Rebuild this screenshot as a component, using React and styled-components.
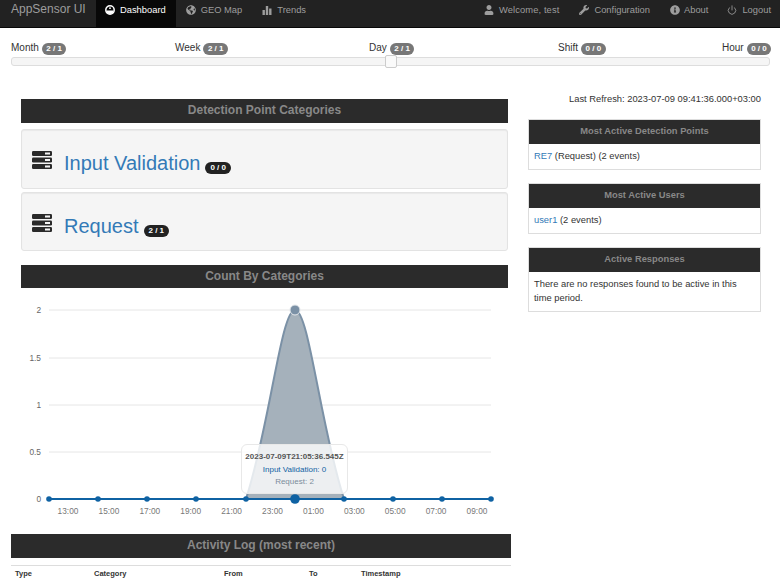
import React from 'react';
import styled, { createGlobalStyle } from 'styled-components';
import { FaUser, FaWrench, FaInfoCircle, FaGlobeAmericas } from 'react-icons/fa';
import { FiPower } from 'react-icons/fi';

const GlobalStyle = createGlobalStyle`
html, body {
    margin: 0;
    height: 580px;
    overflow: hidden;
    background: #fff;
    font-family: "Liberation Sans", Arial, sans-serif;
    font-size: 10px;
    color: #333;
}
`;

const Navbar = styled.nav`
display: flex;
justify-content: space-between;
height: 27px;
background: #222;
border-bottom: 1px solid #080808;
`;

const NavGroup = styled.div`
display: flex;
`;

const Brand = styled.div`
width: 96px;
box-sizing: border-box;
padding-left: 11px;
font-size: 12px;
line-height: 19px;
color: #9d9d9d;
`;

const NavItem = styled.div`
display: flex;
align-items: flex-start;
gap: ${p => p.$gap || 5}px;
padding: 5px ${p => p.$right || 10}px 0 ${p => p.$left || 10}px;
line-height: 10px;
font-size: 9.35px;
letter-spacing: ${p => p.$spacing || 0}px;
color: ${p => p.$active ? '#fff' : '#9d9d9d'};
background: ${p => p.$active ? '#080808' : 'transparent'};
svg { flex: none; width: 10px; height: 10px; }
`;

const SliderBlock = styled.div`
padding: 13px 10px 0 11px;
`;

const SliderLabels = styled.div`
display: grid;
grid-template-columns: 164px 194px 189px 164px 48px;
height: 15px;
`;

const SliderLabel = styled.div`
white-space: nowrap;
line-height: 13px;
font-size: 10px;
color: #333;
`;

const Badge = styled.span`
display: inline-block;
min-width: 10px;
padding: 0 ${p => p.$dark ? 5 : 4.5}px;
margin-left: ${p => p.$gap || 3}px;
line-height: 12px;
border-radius: 8px;
font-size: 8px;
font-weight: bold;
text-align: center;
color: #fff;
background: ${p => p.$dark ? '#222' : '#777'};
`;

const Track = styled.div`
position: relative;
height: 7px;
margin-top: 1px;
background: #f5f5f5;
border: 1px solid #ddd;
border-radius: 3px;
`;

const Thumb = styled.div`
position: absolute;
left: 373px;
top: -3px;
width: 10px;
height: 11px;
background: #fafafa;
border: 1px solid #ccc;
border-radius: 2px;
`;

const Columns = styled.div`
display: flex;
padding: 25px 0 0 11px;
`;

const LeftCol = styled.div`
width: 500px;
flex: none;
padding-top: 8px;
`;

const Inset = styled.div`
padding: 0 3px 0 10px;
`;

const Heading = styled.div`
height: ${p => p.$h || 24}px;
margin-top: ${p => p.$mt || 0}px;
line-height: ${p => p.$line || p.$h || 24}px;
text-align: center;
font-size: 12px;
font-weight: bold;
color: #888;
background: #2b2b2b;
`;

const Well = styled.div`
display: flex;
align-items: flex-start;
height: ${p => p.$h}px;
margin-top: ${p => p.$mt}px;
padding: 21px 0 0 10px;
box-sizing: border-box;
background: #f5f5f5;
border: 1px solid #e3e3e3;
border-radius: 3px;
box-shadow: inset 0 1px 1px rgba(0,0,0,.05);
`;

const WellTitle = styled.div`
display: flex;
align-items: baseline;
margin-left: 12px;
`;

const WellLink = styled.a`
font-size: 20px;
line-height: 24px;
color: #337ab7;
`;

const ChartBox = styled.div`
position: relative;
height: 242px;
svg { display: block; }
`;

const Tooltip = styled.div`
position: absolute;
left: 230px;
top: 156px;
width: 107px;
height: 50px;
box-sizing: border-box;
padding-top: 6px;
text-align: center;
white-space: nowrap;
font-size: 8px;
line-height: 12.5px;
background: rgba(255,255,255,.8);
border: 1px solid #e8e8e8;
border-radius: 6px;
`;

const TipTitle = styled.div`
font-weight: bold;
color: #555;
`;

const TipRow = styled.div`
color: ${p => p.$color};
`;

const LogTable = styled.div`
display: grid;
grid-template-columns: 79px 130px 85px 52px 1fr;
margin-top: 7px;
padding: 2px 4px;
border-top: 1px solid #ddd;
font-size: 7.5px;
line-height: 12px;
font-weight: bold;
color: #333;
`;

const RightCol = styled.div`
width: 233px;
margin-left: 17px;
flex: none;
`;

const Refresh = styled.div`
height: 28px;
box-sizing: border-box;
padding-top: 1px;
text-align: right;
line-height: 14px;
font-size: 9.35px;
`;

const Card = styled.div`
margin-bottom: 13px;
border: 1px solid #ddd;
`;

const CardHead = styled.div`
height: 24px;
line-height: 23px;
text-align: center;
font-size: 9.35px;
font-weight: bold;
color: #888;
background: #2b2b2b;
`;

const CardBody = styled.div`
padding: 5px 5px 6px;
font-size: 9.35px;
line-height: 14px;
a { color: #337ab7; }
`;

const ServerIcon = () => (
    <svg width="20" height="18" viewBox="0 0 20 18">
        {[0, 6.5, 13].map(y => (
            <g key={y}>
                <rect x="0" y={y} width="20" height="5" rx="1.2" fill="#2a2a2a" />
                <rect x="13" y={y + 1.5} width="5" height="2" fill="#f5f5f5" />
            </g>
        ))}
    </svg>
);

const DashIcon = () => (
    <svg viewBox="0 0 10 10">
        <circle cx="5" cy="5" r="4.2" fill="none" stroke="#fff" strokeWidth="1.5" />
        <path d="M1.5 5.4h7A3.5 3.5 0 0 1 1.5 5.4z" fill="#fff" />
        <circle cx="5" cy="3.2" r=".9" fill="#fff" />
    </svg>
);

const BarsIcon = () => (
    <svg viewBox="0 0 10 10" fill="#9d9d9d">
        <rect x="0.5" y="5" width="2.4" height="5" />
        <rect x="3.8" y="1" width="2.4" height="9" />
        <rect x="7.1" y="3.5" width="2.4" height="6.5" />
    </svg>
);

const xLabels = ['13:00', '15:00', '17:00', '19:00', '21:00', '23:00', '01:00', '03:00', '05:00', '07:00', '09:00'];
const yLabels = [['2', 310], ['1.5', 358], ['1', 405], ['0.5', 452], ['0', 499]];
const points = [49, 98, 147, 196, 246, 344, 393, 442, 491];
const curve = 'M246 499C270 425 281 310 295 310C309 310 320 425 344 499';

const Chart = () => (
    <svg width="500" height="242" viewBox="11 288 500 242" fontFamily="'Liberation Sans', Arial, sans-serif">
        {yLabels.map(([t, y]) => (
            <g key={t}>
                {y !== 499 && <line x1="49" x2="491" y1={y} y2={y} stroke="#e6e6e6" strokeWidth="1" />}
                <text x="41" y={y + 3} textAnchor="end" fontSize="8.3" fill="#666">{t}</text>
            </g>
        ))}
        <path d={curve + 'Z'} fill="#a5b1bb" />
        <path d={curve} fill="none" stroke="#7b91a6" strokeWidth="2" />
        <line x1="49" x2="491" y1="499" y2="499" stroke="#0f62a3" strokeWidth="2.2" />
        {points.map(x => <circle key={x} cx={x} cy="499" r="2.8" fill="#0f62a3" />)}
        <circle cx="295" cy="499" r="4.8" fill="#0f62a3" />
        <circle cx="295" cy="310" r="5" fill="#7b91a6" stroke="#e4e8ec" strokeWidth="1" />
        {xLabels.map((t, i) => (
            <text key={t} x={68 + i * 40.9} y="514" textAnchor="middle" fontSize="8.3" fill="#777">{t}</text>
        ))}
    </svg>
);

export default function App() {
    return (
        <>
            <GlobalStyle />
            <Navbar>
                <NavGroup>
                    <Brand>AppSensor UI</Brand>
                    <NavItem $active $left={9}><DashIcon />Dashboard</NavItem>
                    <NavItem><FaGlobeAmericas />GEO Map</NavItem>
                    <NavItem><BarsIcon />Trends</NavItem>
                </NavGroup>
                <NavGroup>
                    <NavItem $spacing={0.1}><FaUser />Welcome, test</NavItem>
                    <NavItem><FaWrench />Configuration</NavItem>
                    <NavItem $gap={4}><FaInfoCircle />About</NavItem>
                    <NavItem $left={9} $right={9}><FiPower />Logout</NavItem>
                </NavGroup>
            </Navbar>
            <SliderBlock>
                <SliderLabels>
                    <SliderLabel>Month<Badge>2 / 1</Badge></SliderLabel>
                    <SliderLabel>Week<Badge>2 / 1</Badge></SliderLabel>
                    <SliderLabel>Day<Badge>2 / 1</Badge></SliderLabel>
                    <SliderLabel>Shift<Badge>0 / 0</Badge></SliderLabel>
                    <SliderLabel>Hour<Badge>0 / 0</Badge></SliderLabel>
                </SliderLabels>
                <Track><Thumb /></Track>
            </SliderBlock>
            <Columns>
                <LeftCol>
                    <Inset>
                        <Heading $h={24} $line={22}>Detection Point Categories</Heading>
                        <Well $h={60} $mt={6}>
                            <ServerIcon />
                            <WellTitle>
                                <WellLink>Input Validation</WellLink>
                                <Badge $dark $gap={5}>0 / 0</Badge>
                            </WellTitle>
                        </Well>
                        <Well $h={59} $mt={3}>
                            <ServerIcon />
                            <WellTitle>
                                <WellLink>Request</WellLink>
                                <Badge $dark $gap={5}>2 / 1</Badge>
                            </WellTitle>
                        </Well>
                        <Heading $h={23} $mt={14}>Count By Categories</Heading>
                    </Inset>
                    <ChartBox>
                        <Chart />
                        <Tooltip>
                            <TipTitle>2023-07-09T21:05:36.545Z</TipTitle>
                            <TipRow $color="#0f62a3">Input Validation: 0</TipRow>
                            <TipRow $color="#7b8b9b">Request: 2</TipRow>
                        </Tooltip>
                    </ChartBox>
                    <Heading $h={24} $line={22} $mt={4}>Activity Log (most recent)</Heading>
                    <LogTable>
                        <span>Type</span>
                        <span>Category</span>
                        <span>From</span>
                        <span>To</span>
                        <span>Timestamp</span>
                    </LogTable>
                </LeftCol>
                <RightCol>
                    <Refresh>Last Refresh: 2023-07-09 09:41:36.000+03:00</Refresh>
                    <Card>
                        <CardHead>Most Active Detection Points</CardHead>
                        <CardBody><a>RE7</a> (Request) (2 events)</CardBody>
                    </Card>
                    <Card>
                        <CardHead>Most Active Users</CardHead>
                        <CardBody><a>user1</a> (2 events)</CardBody>
                    </Card>
                    <Card>
                        <CardHead>Active Responses</CardHead>
                        <CardBody>There are no responses found to be active in this time period.</CardBody>
                    </Card>
                </RightCol>
            </Columns>
        </>
    );
}
